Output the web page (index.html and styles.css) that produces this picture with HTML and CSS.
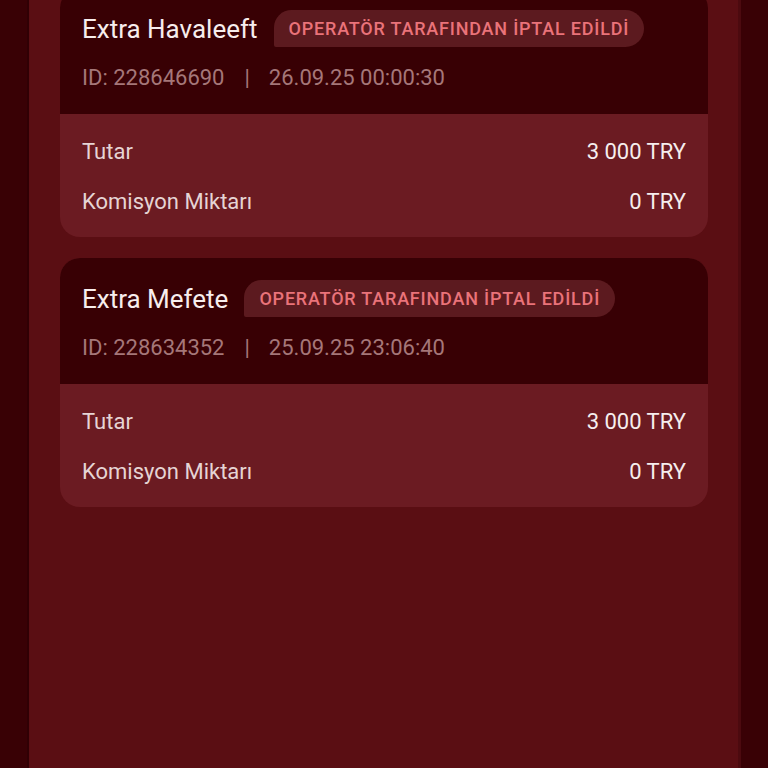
FILE: index.html
```html
<!DOCTYPE html>
<html lang="tr">
<head>
<meta charset="utf-8">
<title>İşlemler</title>
<link rel="stylesheet" href="styles.css">
</head>
<body>
<div class="screen">
  <main class="panel">
    <div class="list">
      <section class="card">
        <header class="card-head">
          <div class="title-row">
            <span class="title">Extra Havaleeft</span>
            <span class="badge">OPERATÖR TARAFINDAN İPTAL EDİLDİ</span>
          </div>
          <div class="meta"><span>ID: 228646690</span><span class="sep">|</span><span>26.09.25 00:00:30</span></div>
        </header>
        <div class="card-body">
          <div class="row"><span class="label">Tutar</span><span class="value">3 000 TRY</span></div>
          <div class="row"><span class="label">Komisyon Miktarı</span><span class="value">0 TRY</span></div>
        </div>
      </section>
      <section class="card">
        <header class="card-head">
          <div class="title-row">
            <span class="title">Extra Mefete</span>
            <span class="badge">OPERATÖR TARAFINDAN İPTAL EDİLDİ</span>
          </div>
          <div class="meta"><span>ID: 228634352</span><span class="sep">|</span><span>25.09.25 23:06:40</span></div>
        </header>
        <div class="card-body">
          <div class="row"><span class="label">Tutar</span><span class="value">3 000 TRY</span></div>
          <div class="row"><span class="label">Komisyon Miktarı</span><span class="value">0 TRY</span></div>
        </div>
      </section>
    </div>
  </main>
</div>
</body>
</html>
```
FILE: styles.css
```css
html, body {
  margin: 0;
  padding: 0;
  height: 100%;
}
body {
  background: #390105;
  font-family: Roboto, "Liberation Sans", sans-serif;
  overflow: hidden;
}
.screen {
  display: flex;
  height: 768px;
  padding-left: 29px;
}
.panel {
  width: 709px;
  height: 100%;
  background: #5a0e13;
  box-sizing: border-box;
  padding: 0 30px 0 31px;
  box-shadow: -2px 0 0 #300004, 3px 0 0 #4c0a0f;
}
.list {
  display: flex;
  flex-direction: column;
  gap: 21px;
  margin-top: -12px;
}
.card {
  border-radius: 20px;
  overflow: hidden;
  background: #6b1b22;
}
.card-head {
  background: #380004;
  padding: 22px 22px 24px;
}
.title-row {
  display: flex;
  align-items: center;
  gap: 16px;
}
.title {
  font-size: 26px;
  color: #f7eded;
  line-height: 30px;
}
.badge {
  display: inline-flex;
  align-items: center;
  height: 37px;
  padding: 0 15px;
  background: #5c1a1f;
  color: #ea737a;
  font-weight: 500;
  font-size: 18px;
  letter-spacing: 0.8px;
  border-radius: 18px 19px 19px 2px;
}
.meta {
  margin-top: 19px;
  font-size: 22px;
  line-height: 24px;
  color: #a57779;
}
.sep {
  margin: 0 19px 0 20px;
}
.card-body {
  padding: 26px 22px 23px;
  display: flex;
  flex-direction: column;
  gap: 26px;
}
.row {
  display: flex;
  justify-content: space-between;
  font-size: 22px;
  line-height: 24px;
}
.label {
  color: #e6d4d4;
}
.value {
  color: #f6eeee;
}
```
